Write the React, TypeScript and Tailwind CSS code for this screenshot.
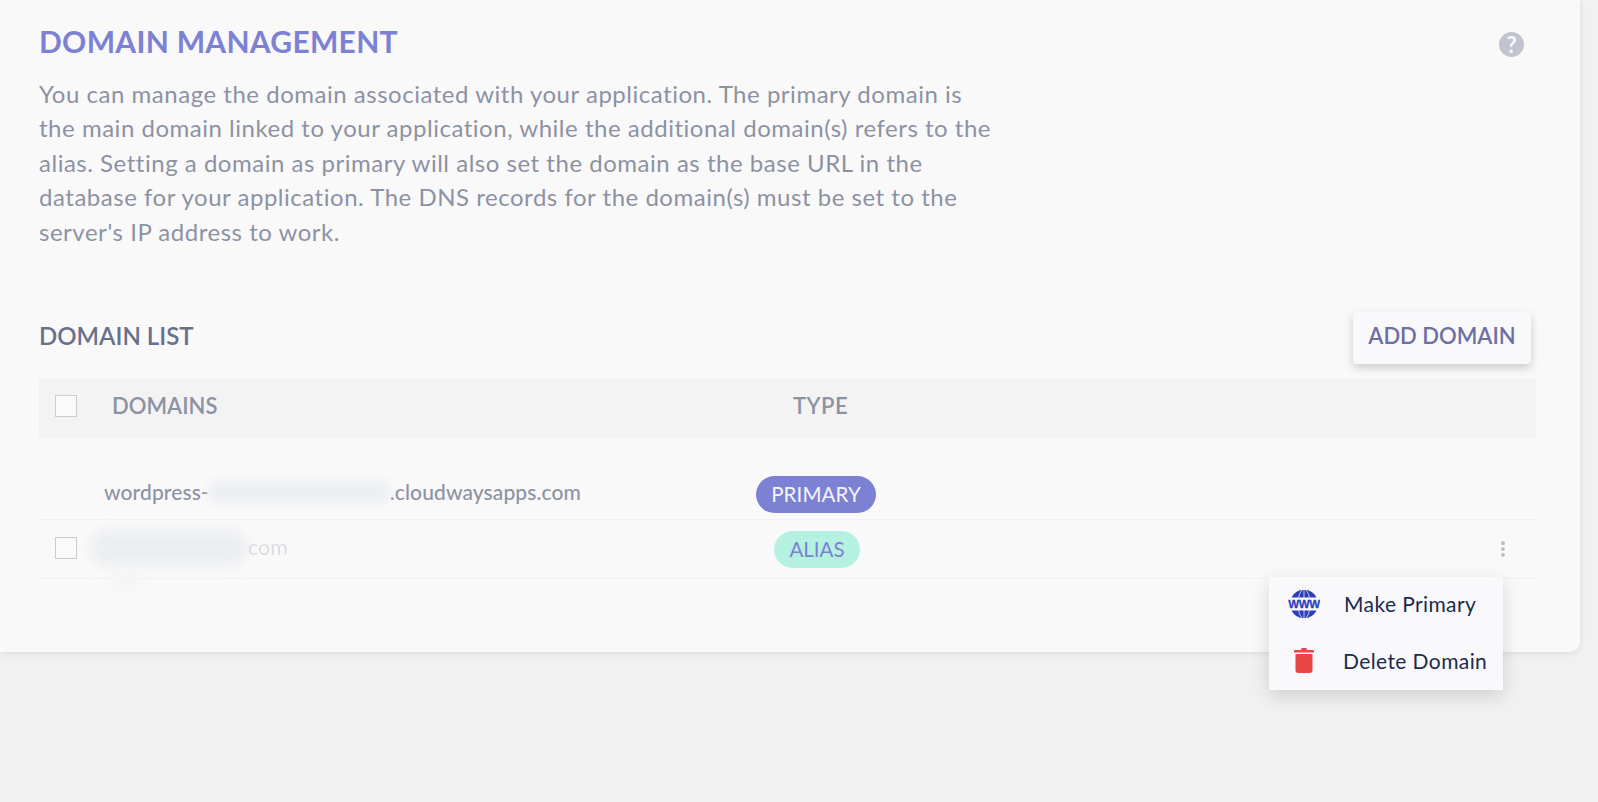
import { MoreVertical } from "lucide-react";

const font = { fontFamily: "Lato, 'Open Sans', sans-serif" };

function WwwIcon() {
  return (
    <svg width="32" height="32" viewBox="0 0 32 32" fill="none">
      <path d="M3.500 9.500A14 14 0 0 1 28.500 9.500z" fill="#2f3fb8" />
      <path d="M3.500 22.500A14 14 0 0 0 28.500 22.500z" fill="#2f3fb8" />
      <path d="M16 1v9M10.500 10Q11 5.500 14 2M21.500 10Q21 5.500 18 2M16 22v9M10.500 22Q11 26.500 14 30M21.500 22Q21 26.500 18 30" stroke="#f9f9fb" strokeWidth="0.7" />
      <text x="16" y="20.200" textAnchor="middle" fontSize="11.500" fontWeight="700" fill="#2f3fb8" stroke="#2f3fb8" strokeWidth="0.3" fontFamily="'Liberation Sans', sans-serif" letterSpacing="-0.4">
        WWW
      </text>
    </svg>
  );
}

function TrashIcon() {
  return (
    <svg width="20" height="25" viewBox="0 0 20 25" fill="#e84545">
      <path d="M7 1.500C7 .7 7.700 0 8.500 0h3c.8 0 1.500.7 1.500 1.500V2h6c.6 0 1 .5 1 1v1.500H0V3c0-.5.4-1 1-1h6z" />
      <path d="M1.500 6h17v16.500c0 1.400-1.100 2.500-2.500 2.500H4c-1.400 0-2.500-1.100-2.500-2.500z" />
    </svg>
  );
}

function Checkbox() {
  return <div className="h-[22px] w-[22px] shrink-0 border border-[#c9ccd1] bg-[#fafafa]" />;
}

export default function App() {
  return (
    <div className="h-[802px] w-[1598px] overflow-hidden bg-[#f1f1f1]" style={font}>
      <div className="relative h-[652px] w-[1580px] rounded-br-[10px] bg-[#f9f9fa] pl-[39px] pr-[44px] pt-[21px] shadow-[0_1px_6px_rgba(0,0,0,0.1)]">
        <div className="flex items-start justify-between">
          <div>
            <h1 className="text-[30px] leading-[40px] font-bold tracking-[0.3px] text-[#7d81d3]">DOMAIN MANAGEMENT</h1>
            <p className="mt-[16px] w-[955px] text-[24px] leading-[34.4px] tracking-[0.52px] text-[#8d92a3]">
              You can manage the domain associated with your application. The primary domain is the main domain linked to your application, while the additional domain(s) refers to the alias. Setting a domain as primary will also set the domain as the base URL in the database for your application. The DNS records for the domain(s) must be set to the server's IP address to work.
            </p>
          </div>
          <div className="mr-[12px] mt-[11px] flex h-[25px] w-[25px] items-center justify-center rounded-full bg-[#c0c4ce] text-[22px] leading-none font-bold text-[#f9f9fa]">
            ?
          </div>
        </div>

        <div className="mt-[63px] mr-[5px] flex items-center justify-between">
          <h2 className="mb-[5px] text-[24px] font-semibold text-[#68708a]">DOMAIN LIST</h2>
          <button className="flex h-[52px] w-[178px] items-center justify-center rounded-[4px] bg-[#f9f9fb] pb-[5px] text-[22px] font-semibold text-[#6f6fa3] shadow-[0_4px_10px_rgba(0,0,0,0.18)]">
            ADD DOMAIN
          </button>
        </div>

        <div className="mt-[15px] flex h-[59px] items-center bg-[#f3f3f4] pb-[6px] pl-[16px] text-[22px] font-semibold text-[#8d92a3]">
          <Checkbox />
          <span className="ml-[35px] w-[681px]">DOMAINS</span>
          <span className="tracking-[0.5px]">TYPE</span>
        </div>

        <div className="mt-[25px] flex h-[57px] items-center border-b border-[#f1f1f3] pl-[64px] pt-[2px] text-[21px] font-medium tracking-[0.1px] text-[#8d92a3]">
          <div className="ml-[1px] flex w-[653px] items-center">
            <span>wordpress-</span>
            <span className="h-[24px] w-[181px] rounded-full bg-[#eceef0] blur-[5px]" />
            <span>.cloudwaysapps.com</span>
          </div>
          <div className="mt-[5px] flex w-[118px] justify-center">
            <span className="rounded-full bg-[#7d81d3] px-[15px] py-[5px] text-[20.5px] leading-[27px] font-normal text-[#f4f4fb]">
              PRIMARY
            </span>
          </div>
        </div>

        <div className="flex h-[59px] items-center border-b border-[#f1f1f3] pl-[16px] text-[20.5px]">
          <div className="-mt-[3px]">
            <Checkbox />
          </div>
          <div className="relative ml-[13px] -mt-[3px] flex w-[668px] items-center">
            <span className="h-[36px] w-[158px] rounded-full bg-[#eceef0] blur-[6px]" />
            <span className="text-[21.5px] text-[#dcdee3] blur-[0.7px]">com</span>
            <span className="absolute left-[20px] top-[44px] h-[16px] w-[30px] rounded-full bg-[#f5f5f6] blur-[4px]" />
          </div>
          <div className="flex w-[118px] justify-center">
            <span className="rounded-full bg-[#b5f1e1] px-[15px] py-[5px] leading-[27px] text-[#7d81d3]">ALIAS</span>
          </div>
          <MoreVertical className="ml-auto mr-[23px] h-[20px] w-[20px] text-[#b8b9bd]" strokeWidth={2.500} />
        </div>

        <div className="absolute left-[1269px] top-[577px] z-10 h-[113px] w-[234px] bg-[#f9f9fb] text-[21px] text-[#1d2a4d] shadow-[0_6px_18px_rgba(0,0,0,0.14)]">
          <div className="flex h-[56px] items-center pl-[19px] pb-[3px]">
            <WwwIcon />
            <span className="ml-[24px] tracking-[0.4px]">Make Primary</span>
          </div>
          <div className="flex h-[57px] items-center pl-[25px] pb-[2px]">
            <TrashIcon />
            <span className="ml-[29px] tracking-[0.4px]">Delete Domain</span>
          </div>
        </div>
      </div>
    </div>
  );
}
